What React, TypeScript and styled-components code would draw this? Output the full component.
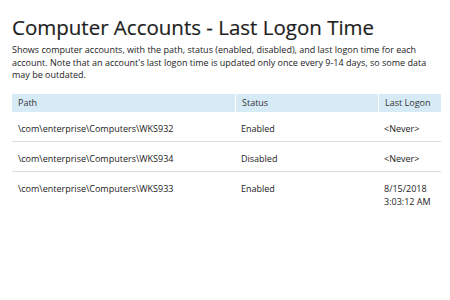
import React from "react";
import styled, { createGlobalStyle } from "styled-components";

const GlobalStyle = createGlobalStyle`
  html, body {
    margin: 0;
    padding: 0;
    background: #ffffff;
  }
  body {
    font-family: "Open Sans", "Noto Sans", sans-serif;
    color: #222;
  }
`;

const Page = styled.div`
  width: 450px;
  height: 300px;
  box-sizing: border-box;
  padding: 13px 9px 0 12px;
  background: #fff;
`;

const Title = styled.h1`
  margin: 0;
  font-size: 20.5px;
  font-weight: 400;
  line-height: 28px;
  color: #1f1f1f;
  -webkit-text-stroke: 0.2px #1f1f1f;
`;

const Description = styled.p`
  margin: 3px 0 0;
  font-size: 9px;
  line-height: 12.5px;
  color: #222;
`;

const Table = styled.div`
  margin-top: 12px;
  display: grid;
  grid-template-columns: 223px 143px 63px;
`;

const HeadCell = styled.div`
  background: #d7ebf7;
  height: 18px;
  padding: 0 6px;
  display: flex;
  align-items: center;
  font-size: 9px;
  color: #333;
  & + & {
    border-left: 1px solid #fff;
  }
`;

const Cell = styled.div<{ $last?: boolean }>`
  padding: 10px 6px 6px;
  font-size: 9px;
  line-height: 13px;
  color: #222;
  border-bottom: ${({ $last }) => ($last ? "none" : "1px solid #dcdcdc")};
`;

interface Row {
  path: string;
  status: string;
  logon: string[];
}

const rows: Row[] = [
  { path: "\\com\\enterprise\\Computers\\WKS932", status: "Enabled", logon: ["<Never>"] },
  { path: "\\com\\enterprise\\Computers\\WKS934", status: "Disabled", logon: ["<Never>"] },
  {
    path: "\\com\\enterprise\\Computers\\WKS933",
    status: "Enabled",
    logon: ["8/15/2018", "3:03:12 AM"],
  },
];

const App: React.FC = () => {
  return (
    <>
      <GlobalStyle />
      <Page>
        <Title>Computer Accounts - Last Logon Time</Title>
        <Description>
          Shows computer accounts, with the path, status (enabled, disabled), and last logon time
          for each account. Note that an account's last logon time is updated only once every 9-14
          days, so some data may be outdated.
        </Description>
        <Table>
          <HeadCell>Path</HeadCell>
          <HeadCell>Status</HeadCell>
          <HeadCell>Last Logon</HeadCell>
          {rows.map((r, i) => {
            const last = i === rows.length - 1;
            return (
              <React.Fragment key={r.path}>
                <Cell $last={last}>{r.path}</Cell>
                <Cell $last={last}>{r.status}</Cell>
                <Cell $last={last}>
                  {r.logon.map((l) => (
                    <div key={l}>{l}</div>
                  ))}
                </Cell>
              </React.Fragment>
            );
          })}
        </Table>
      </Page>
    </>
  );
};

export default App;
